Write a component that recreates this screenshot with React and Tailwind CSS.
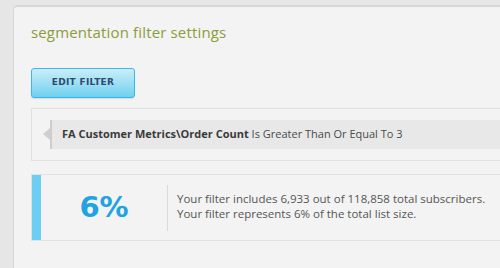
export default function App() {
  return (
    <div className="w-[500px] h-[268px] overflow-hidden bg-[#e6e6e6] pt-[5px] pl-[13px]" style={{ fontFamily: '"Open Sans", "DejaVu Sans", sans-serif' }}>
      <div className="h-[300px] w-[520px] rounded-tl-[5px] bg-[#f3f3f3] border-t-2 border-l border-[#d6d6d6] pl-[17px] pt-[16px]">
        <h1 className="text-[15px] leading-[18px] text-[#8d9b3c] tracking-[0.15px]">segmentation filter settings</h1>
        <button className="mt-[27px] w-[104px] h-[30px] rounded-[3px] border border-[#3cb8e8] bg-gradient-to-b from-[#c9eef8] to-[#6dd0ef] text-[9px] font-bold text-[#2a4d70] tracking-[0.3px] shadow-[0_1px_1px_rgba(0,0,0,0.1)]" style={{ fontFamily: '"DejaVu Sans", sans-serif' }}>
          EDIT FILTER
        </button>
        <div className="mt-[10px] border border-[#e1e1e1] h-[53px] py-[11px] pl-[18px]">
          <div className="relative h-[29px] bg-[#e8e8e8] border-l-2 border-[#cdcdcd] flex items-center pl-[10px] text-[11px] text-[#4a4a4a]">
            <span className="absolute left-[-9px] top-[8px] w-0 h-0 border-y-[6px] border-y-transparent border-r-[7px] border-r-[#cfcfcf]"></span>
            <span className="font-bold text-[#3a3a3a]">FA Customer Metrics\Order Count</span>
            <span>&nbsp;Is Greater Than Or Equal To 3</span>
          </div>
        </div>
        <div className="mt-[13px] border border-[#e1e1e1] h-[67px] flex items-center">
          <div className="self-stretch w-[9px] bg-[#6ccff1]"></div>
          <div className="w-[126px] flex justify-center items-center">
            <span className="text-[29px] font-bold text-[#1fa3e2] leading-none" style={{ fontFamily: '"DejaVu Sans", sans-serif' }}>6%</span>
          </div>
          <div className="w-px h-[46px] bg-[#dadada]"></div>
          <div className="pl-[9px] -mt-[3px] text-[11.5px] leading-[15px] text-[#555]">
            <div>Your filter includes 6,933 out of 118,858 total subscribers.</div>
            <div>Your filter represents 6% of the total list size.</div>
          </div>
        </div>
      </div>
    </div>
  );
}
